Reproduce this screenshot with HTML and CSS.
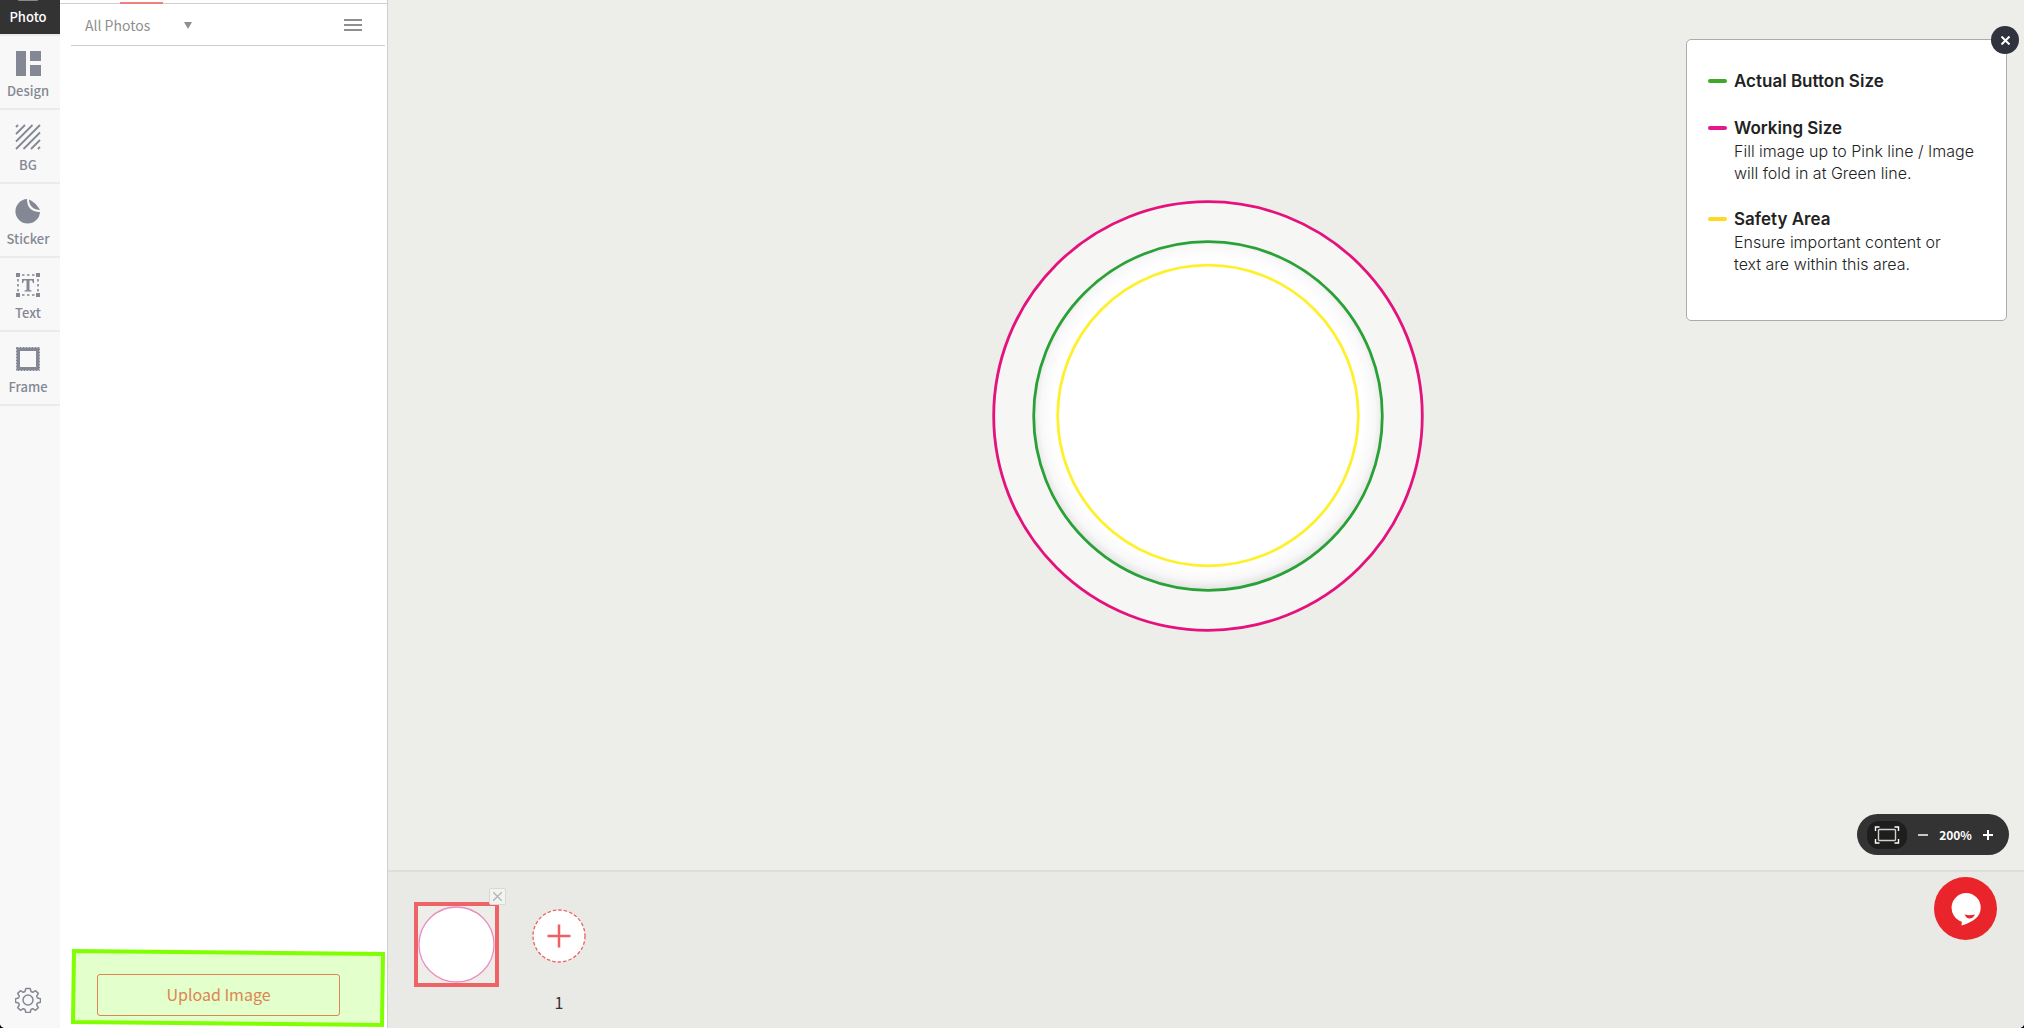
FILE: index.html
```html
<!DOCTYPE html>
<html lang="en">

<head>
    <meta charset="UTF-8">
    <meta name="viewport" content="width=device-width, initial-scale=1.0">
    <title>Button Designer</title>
    <link rel="stylesheet" href="styles.css">
</head>

<body>

    <div class="app">
        <nav class="rail">
            <button class="rail-item active">
                <svg width="26" height="26" viewBox="0 0 26 26"><rect x="3" y="3" width="20" height="22" rx="1" fill="#8a8a8a" /></svg>
                <span>Photo</span>
            </button>
            <button class="rail-item">
                <svg width="26" height="26" viewBox="0 0 26 26" fill="currentColor">
                    <rect x="1" y="1" width="10" height="25" />
                    <rect x="15" y="1" width="11" height="10" />
                    <rect x="15" y="15" width="11" height="11" />
                </svg>
                <span>Design</span>
            </button>
            <button class="rail-item">
                <svg width="26" height="26" viewBox="0 0 26 26" fill="none" stroke="currentColor" stroke-width="1.8">
                    <path d="M1 3L3 1M1 10L10 1M1 17.500L17.500 1M1 25L25 1M8.500 25L25 8.500M16 25L25 16M23 25L25 23" />
                </svg>
                <span>BG</span>
            </button>
            <button class="rail-item">
                <svg width="26" height="26" viewBox="0 0 26 26" fill="currentColor">
                    <path d="M12 1C12 9 16 14 25 14A12.300 12.300 0 1 1 12 1Z" />
                    <path d="M14 1.500C18 3 23 8 25 12C19 12 14 8 14 1.500Z" />
                </svg>
                <span>Sticker</span>
            </button>
            <button class="rail-item">
                <svg width="26" height="26" viewBox="0 0 26 26" fill="currentColor">
                    <path d="M1 1h4v4H1zM21 1h4v4h-4zM1 21h4v4H1zM21 21h4v4h-4z" />
                    <path d="M3 7v13M23 7v13M7 3h13M7 23h13" fill="none" stroke="currentColor" stroke-width="1.6" stroke-dasharray="2.500 2.500" />
                    <path d="M7 7h12v4h-1l-1-2.500h-2.500v9.500l2 .5v1h-7v-1l2-.5v-9.500H9L8 11H7z" />
                </svg>
                <span>Text</span>
            </button>
            <button class="rail-item">
                <svg width="26" height="26" viewBox="0 0 26 26" fill="none" stroke="currentColor">
                    <rect x="3.500" y="3.500" width="19" height="19" stroke-width="3" />
                    <rect x="1.500" y="1.500" width="23" height="23" stroke-width="1" stroke-dasharray="2 1" />
                </svg>
                <span>Frame</span>
            </button>
            <button class="settings" aria-label="Settings">
                <svg width="26" height="26" viewBox="0 0 26 26" fill="none" stroke="currentColor" stroke-width="1.500" stroke-linejoin="round">
                    <path d="M10.800 1.500h4.400l.8 3 1.800.8 2.800-1.600 2.700 2.700-1.600 2.800.8 1.800 3 .8v3.400l-3 .8-.8 1.800 1.600 2.800-2.700 2.700-2.800-1.600-1.800.8-.8 3h-4.400l-.8-3-1.800-.8-2.800 1.600-2.700-2.700 1.600-2.800-.8-1.800-3-.8v-3.400l3-.8.8-1.800-1.600-2.800 2.700-2.700 2.800 1.600 1.800-.8z" />
                    <circle cx="13" cy="13" r="5" />
                </svg>
            </button>
        </nav>

        <aside class="panel">
            <div class="tabs"><span class="tab-marker"></span></div>
            <div class="filter">
                <div class="select-wrap">
                    <select class="album" aria-label="Album">
                        <option>All Photos</option>
                    </select>
                    <svg class="caret" width="8" height="9" viewBox="0 0 8 9"><path d="M0 2h8L4 9z" fill="#8f8f8f" /></svg>
                </div>
                <button class="menu" aria-label="Menu">
                    <svg width="18" height="14" viewBox="0 0 18 14" stroke="#8f8f8f" stroke-width="2"><path d="M0 2h18M0 7h18M0 12h18" /></svg>
                </button>
            </div>
            <div class="photos"></div>
            <div class="upload">
                <svg class="highlight" viewBox="0 0 314 79" preserveAspectRatio="none">
                    <path d="M3 2L312 5L311 76L2 73Z" fill="#e3ffcb" stroke="#80ff00" stroke-width="4" />
                </svg>
                <button class="upload-button">Upload Image</button>
            </div>
        </aside>

        <main class="workspace">
            <section class="stage">
                <svg class="canvas" width="432" height="432" viewBox="0 0 432 432" fill="none">
                    <defs>
                        <radialGradient id="edge" gradientUnits="userSpaceOnUse" cx="216" cy="213" r="178">
                            <stop offset="0.870" stop-color="#fff" />
                            <stop offset="0.940" stop-color="#f8f8f8" />
                            <stop offset="1" stop-color="#e0e0e0" />
                        </radialGradient>
                    </defs>
                    <circle cx="216" cy="216" r="214.300" fill="#f6f6f4" stroke="#e5127d" stroke-width="2.800" />
                    <circle cx="216" cy="216" r="174.300" fill="url(#edge)" stroke="#2aa137" stroke-width="2.800" />
                    <circle cx="216" cy="215.500" r="150.300" fill="#fff" stroke="#fff02d" stroke-width="2.800" />
                </svg>

                <div class="legend">
                    <button class="legend-close" aria-label="Close">
                        <svg width="9" height="9" viewBox="0 0 9 9" stroke="#fff" stroke-width="2"><path d="M.5 .5l8 8M8.500 .5l-8 8" /></svg>
                    </button>
                    <div class="legend-item green">
                        <h2>Actual Button Size</h2>
                    </div>
                    <div class="legend-item pink">
                        <h2>Working Size</h2>
                        <p>Fill image up to Pink line / Image<br>will fold in at Green line.</p>
                    </div>
                    <div class="legend-item yellow">
                        <h2>Safety Area</h2>
                        <p>Ensure important content or<br>text are within this area.</p>
                    </div>
                </div>

                <div class="zoom">
                    <button class="fit" aria-label="Fit to screen">
                        <svg width="26" height="20" viewBox="0 0 26 20" fill="none" stroke="#fff">
                            <path d="M1.500 6V2h4M20.500 2h4v4M24.500 14v4h-4M5.500 18h-4v-4" stroke-width="1.400" />
                            <rect x="4.500" y="4.500" width="17" height="11" rx="1" stroke="#d5d0c8" stroke-width="1.400" />
                        </svg>
                    </button>
                    <button class="step" aria-label="Zoom out">
                        <svg width="10" height="10" viewBox="0 0 10 10" stroke="#c8c8c8" stroke-width="2"><path d="M0 5h10" /></svg>
                    </button>
                    <span class="zoom-value">200%</span>
                    <button class="step" aria-label="Zoom in">
                        <svg width="10" height="10" viewBox="0 0 10 10" stroke="#fff" stroke-width="2"><path d="M0 5h10M5 0v10" /></svg>
                    </button>
                </div>
            </section>

            <section class="pages">
                <div class="page">
                    <button class="page-thumb" aria-label="Page 1">
                        <svg width="77" height="77" viewBox="0 0 78 78"><circle cx="39" cy="39" r="38" fill="#fff" stroke="#ee8cc0" stroke-width="1.300" /></svg>
                    </button>
                    <button class="page-remove" aria-label="Remove page">
                        <svg width="9" height="9" viewBox="0 0 9 9" stroke="#b5b5b5" stroke-width="1.400"><path d="M0 0l9 9M9 0L0 9" /></svg>
                    </button>
                </div>
                <div class="add-page">
                    <button class="add" aria-label="Add page">
                        <svg width="54" height="54" viewBox="0 0 54 54" stroke="#ee6062">
                            <circle cx="27" cy="27" r="26" fill="#fff" stroke-width="1.300" stroke-dasharray="3.500 2" />
                            <path d="M27 15.500v23M15.500 27h23" stroke-width="2.500" />
                        </svg>
                    </button>
                    <span class="page-count">1</span>
                </div>
            </section>
        </main>
    </div>

    <button class="chat" aria-label="Open chat">
        <svg width="30" height="34" viewBox="0 0 30 34">
            <path d="M15 1A14.700 14.700 0 0 1 29.700 15.700C29.700 25 22 30 10.500 33.500L10.800 29.700A14.700 14.700 0 0 1 15 1Z" fill="#fff" />
            <path d="M13.500 22.500Q18.500 24 24 22.500Q22 26.500 18.500 26.500Q15.500 26.500 13.500 22.500Z" fill="#e9242a" />
        </svg>
    </button>

</body>

</html>
```
FILE: styles.css
```css
* {
    box-sizing: border-box;
}

body {
    margin: 0;
    background-color: #000;
    font-family: "Noto Sans CJK SC", "Noto Sans", sans-serif;
    color: #333;
}

button {
    padding: 0;
    border: none;
    background: none;
    font-family: inherit;
    color: inherit;
    cursor: pointer;
}

svg {
    display: block;
}

.app {
    display: flex;
    height: 100vh;
    overflow: hidden;
    border-radius: 0 0 5px 5px;
    background-color: #fff;
}

/* left tool rail */
.rail {
    display: flex;
    flex-direction: column;
    flex: 0 0 60px;
    margin-top: -38px;
    background-color: #f8f8f8;
    color: #848894;
}

.rail-item {
    display: flex;
    flex-direction: column;
    align-items: center;
    gap: 5px;
    height: 74px;
    padding: 14px 4px 0 0;
    border-bottom: 2px solid #ebebeb;
    font-size: 13px;
    font-weight: 500;
    line-height: 20px;
}

.rail-item.active {
    background-color: #333;
    background-clip: padding-box;
    color: #fff;
}

.settings {
    margin: auto auto 15px 15px;
}

/* photo panel */
.panel {
    display: flex;
    flex-direction: column;
    flex: 0 0 328px;
    border-right: 1px solid #cfcfcd;
}

.tabs {
    height: 4px;
    padding: 2px 0 0 60px;
    border-bottom: 1px solid #d0d0d0;
}

.tab-marker {
    display: block;
    width: 43px;
    height: 2px;
    background-color: #f08080;
}

.filter {
    display: flex;
    align-items: center;
    justify-content: space-between;
    height: 42px;
    margin: 0 2px 0 11px;
    padding: 0 23px 0 14px;
    border-bottom: 1px solid #ccc;
}

.select-wrap {
    display: flex;
    align-items: center;
    width: 107px;
}

.album {
    flex: 1;
    margin-right: -8px;
    padding: 0;
    border: none;
    appearance: none;
    background: none;
    font-family: inherit;
    font-size: 14px;
    color: #8f8f8f;
}

.caret {
    pointer-events: none;
}

.photos {
    flex: 1;
}

.upload {
    position: relative;
    margin: 0 2px 0 11px;
    padding: 25px 45px 12px 26px;
}

.highlight {
    position: absolute;
    inset: 0;
    width: 100%;
    height: 100%;
}

.upload-button {
    position: relative;
    display: block;
    width: 100%;
    height: 42px;
    padding-bottom: 3px;
    border: 1px solid #dd8550;
    border-radius: 3px;
    font-size: 16px;
    color: #dd8550;
}

/* workspace */
.workspace {
    display: flex;
    flex-direction: column;
    flex: 1;
    background-color: #edeee9;
}

.stage {
    position: relative;
    display: flex;
    flex: 1;
    align-items: center;
    justify-content: center;
    padding: 0 0 38px 3px;
}

.legend {
    position: absolute;
    top: 39px;
    right: 17px;
    display: flex;
    flex-direction: column;
    gap: 23px;
    width: 321px;
    padding: 29px 20px 45px 21px;
    border: 1px solid #acacac;
    border-radius: 5px;
    background-color: #fff;
    font-family: Inter, sans-serif;
    color: #222;
}

.legend-close {
    position: absolute;
    top: -14px;
    right: -13px;
    display: flex;
    align-items: center;
    justify-content: center;
    width: 28px;
    height: 28px;
    border-radius: 50%;
    background-color: #30333d;
}

.legend-item {
    padding-left: 26px;
}

.legend-item h2 {
    display: flex;
    align-items: center;
    gap: 7px;
    margin: 0 0 0 -26px;
    font-size: 17px;
    font-weight: 600;
    line-height: 24px;
}

.legend-item h2::before {
    content: "";
    width: 19px;
    height: 4px;
    border-radius: 2px;
    background-color: currentColor;
}

.green h2::before {
    background-color: #3fa82b;
}

.pink h2::before {
    background-color: #e5168f;
}

.yellow h2::before {
    background-color: #ffd822;
}

.legend-item p {
    margin: 0;
    font-size: 16px;
    font-weight: 300;
    line-height: 22px;
    white-space: nowrap;
}

.zoom {
    position: absolute;
    right: 15px;
    bottom: 15px;
    display: flex;
    align-items: center;
    justify-content: space-between;
    width: 152px;
    height: 41px;
    padding: 0 16px 0 10px;
    border-radius: 21px;
    background-color: #333;
    color: #fff;
}

.fit {
    display: flex;
    align-items: center;
    justify-content: center;
    width: 40px;
    height: 28px;
    border-radius: 12px;
    background-color: #1e1e1e;
}

.zoom-value {
    font-size: 12px;
    font-weight: 700;
}

/* page strip */
.pages {
    display: flex;
    gap: 33px;
    height: 158px;
    padding: 30px 26px 0;
    border-top: 2px solid #dedfdb;
    background-color: #e9e9e5;
}

.page {
    position: relative;
    align-self: flex-start;
}

.page-thumb {
    display: block;
    border: 4px solid #ee6466;
    background-color: #edede9;
}

.page-remove {
    position: absolute;
    top: -14px;
    right: -7px;
    display: flex;
    align-items: center;
    justify-content: center;
    width: 17px;
    height: 17px;
    border: 1px solid #d8d8d8;
    border-radius: 2px;
    background-color: #f3f3f1;
}

.add-page {
    display: flex;
    flex-direction: column;
    align-items: center;
    gap: 27px;
    padding-top: 7px;
}

.page-count {
    font-size: 16px;
    line-height: 24px;
}

.chat {
    position: fixed;
    right: 27px;
    bottom: 88px;
    display: flex;
    align-items: center;
    justify-content: center;
    width: 63px;
    height: 63px;
    border-radius: 50%;
    background-color: #e9242a;
}
```
